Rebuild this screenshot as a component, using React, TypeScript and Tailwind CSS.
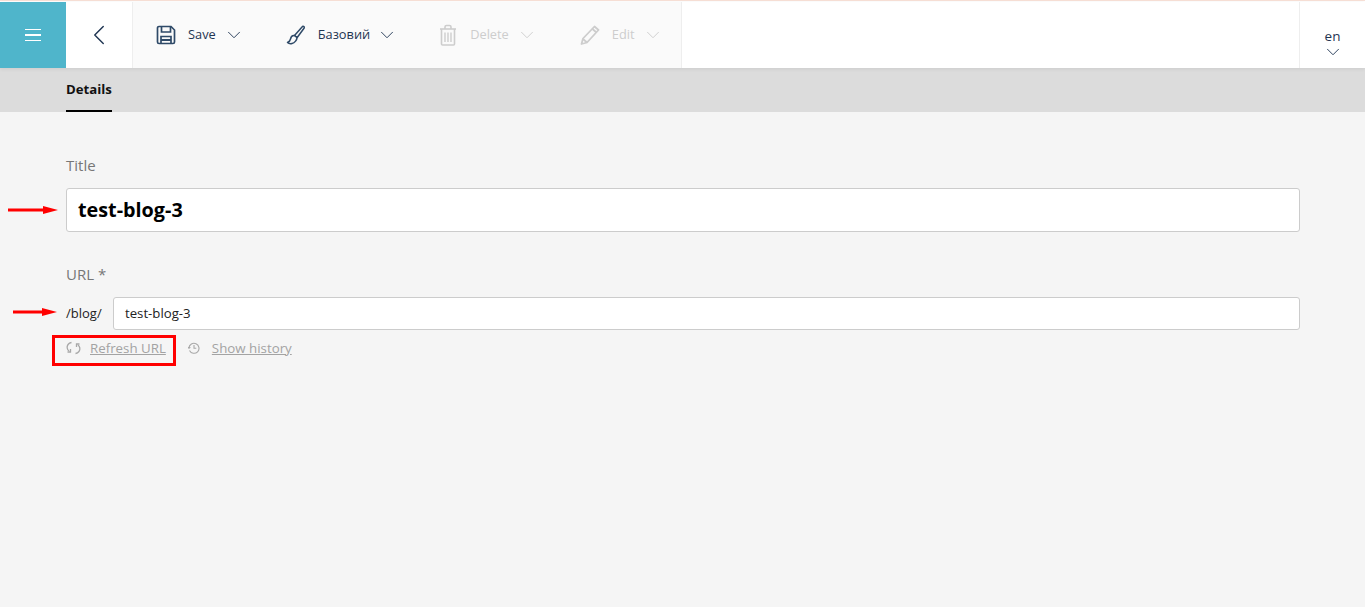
import React from "react";
import { ChevronDown, ChevronLeft } from "lucide-react";

interface ToolButtonProps {
  icon: React.ReactNode;
  label: string;
  disabled?: boolean;
  className?: string;
  chevronClassName?: string;
}

const ToolButton: React.FC<ToolButtonProps> = ({ icon, label, disabled, className, chevronClassName }) => {
  const color = disabled ? "text-[#cdcdcd]" : "text-[#1f3552]";
  return (
    <div className={`flex items-center ${color} ${className ?? ""}`}>
      <span className="flex w-5 justify-center">{icon}</span>
      <span className="ml-[12px] text-[12.8px]">{label}</span>
      <ChevronDown className={chevronClassName ?? "ml-[7px]"} size={22} strokeWidth={1} />
    </div>
  );
};

const SaveIcon = () => (
  <svg width={20} height={20} viewBox="0 0 20 20" fill="none" stroke="#2f4a68" strokeWidth={1.7}>
    <path d="M2.5 1.5h12.5l3.5 3.5v12a1.5 1.5 0 0 1-1.5 1.5h-14a1.5 1.5 0 0 1-1.5-1.5v-14a1.5 1.5 0 0 1 1.5-1.5z" />
    <path d="M5.5 1.5v5.5h9v-5.5" />
    <path d="M5 18.5v-7h10v7" />
    <path d="M5 15h10" strokeWidth={2} />
  </svg>
);

const BrushIcon = () => (
  <svg width={20} height={20} viewBox="0 0 20 20" fill="none" stroke="#2f4a68" strokeWidth={1.5} strokeLinejoin="round">
    <path d="M16.5 1.5c1-.6 2.2.4 1.7 1.5l-7 9.5-2.7-2z" />
    <path d="M8.5 10.5c-2.5-.4-3.6 1.5-4 3.5-.3 1.7-1.500 2.800-3 3.500 1 1 3 1.300 4.500 1 2.800-.5 5-3.800 5-6z" />
  </svg>
);

const TrashIcon = () => (
  <svg width={20} height={22} viewBox="0 0 20 22" fill="none" stroke="#cdcdcd" strokeWidth={1.6}>
    <path d="M2 5h16" />
    <path d="M7 5v-2a1.500 1.500 0 0 1 1.500-1.500h3a1.500 1.500 0 0 1 1.500 1.500v2" />
    <path d="M3.500 5v15a1 1 0 0 0 1 1h11a1 1 0 0 0 1-1v-15" />
    <path d="M7 8.500v9.500M10 8.500v9.500M13 8.500v9.500" strokeWidth={1.400} />
  </svg>
);

const PencilIcon = () => (
  <svg width={20} height={20} viewBox="0 0 20 20" fill="none" stroke="#cdcdcd" strokeWidth={1.800} strokeLinejoin="round">
    <path d="M14.500 1.500l4 3.500-11.500 12.500-5.500 1.500 1.500-5.500z" />
    <path d="M12.500 4l4 3.500" />
    <path d="M3 14l4 3.500" />
  </svg>
);

const RefreshIcon = () => (
  <svg width={15} height={14} viewBox="0 0 15 14" fill="none" stroke="#a8a8a8" strokeWidth={1.300}>
    <path d="M5.500 1.500c-3 .5-4.800 3-4.300 5.500.2 1.300.9 2.300 1.800 3" />
    <path d="M9.500 12.500c3-.5 4.800-3 4.300-5.500-.2-1.300-.9-2.300-1.800-3" />
    <path d="M1.500 11h3v-3" />
    <path d="M13.500 3h-3v3" />
  </svg>
);

const HistoryIcon = () => (
  <svg width={12} height={12} viewBox="0 0 12 12" fill="none" stroke="#a8a8a8" strokeWidth={1.100}>
    <path d="M1.500 8.500a5 5 0 1 0 -.5 -2.500" />
    <path d="M6 3v3.200h2.300" />
    <path d="M0 5l1 1.300 1.300-1" />
  </svg>
);

const RedArrow: React.FC<{ className: string; width: number }> = ({ className, width }) => (
  <svg className={`absolute ${className}`} width={width} height={10} viewBox={`0 0 ${width} 10`}>
    <rect x={0} y={3.500} width={width - 10} height={3} fill="#ff0000" />
    <polygon points={`${width - 15},1 ${width},5 ${width - 15},9`} fill="#ff0000" />
  </svg>
);

const App: React.FC = () => {
  return (
    <div className="relative h-[607px] w-[1365px] overflow-hidden bg-[#f5f5f5] font-['Open_Sans',sans-serif]">
      <div className="h-[2px] border-t border-[#f8e0d6] bg-white" />
      <header className="relative z-10 flex h-[66px] bg-white shadow-[0_1px_4px_rgba(0,0,0,0.08)]">
        <div className="flex w-[66px] flex-col items-center justify-center gap-[4px] bg-[#4fb5cb]">
          <span className="h-[1.500px] w-[16px] bg-white" />
          <span className="h-[1.500px] w-[16px] bg-white" />
          <span className="h-[1.500px] w-[16px] bg-white" />
        </div>
        <div className="flex w-[67px] items-center justify-center border-r border-[#eeeeee] text-[#1f3552]">
          <ChevronLeft size={34} strokeWidth={1} />
        </div>
        <div className="flex w-[549px] items-center border-r border-[#eeeeee] bg-[#fafafa] pl-[23px]">
          <ToolButton icon={<SaveIcon />} label="Save" />
          <ToolButton className="ml-[41px]" chevronClassName="ml-[6px]" icon={<BrushIcon />} label="Базовий" />
          <ToolButton className="ml-[40px]" disabled icon={<TrashIcon />} label="Delete" />
          <ToolButton className="ml-[42px]" disabled icon={<PencilIcon />} label="Edit" />
        </div>
        <div className="flex-1" />
        <div className="flex w-[66px] flex-col items-center justify-center border-l border-[#eeeeee] pt-[16px] text-[#1f3552]">
          <span className="text-[13.500px] leading-[18px]">en</span>
          <ChevronDown className="-my-[4px]" size={22} strokeWidth={1} />
        </div>
      </header>

      <nav className="flex h-[44px] bg-[#dcdcdc] pl-[66px]">
        <div className="flex h-[44px] items-center border-b-2 border-black pt-[2px] text-[13.200px] font-bold text-[#111111]">
          Details
        </div>
      </nav>

      <main className="ml-[66px] w-[1234px] pt-[43px]">
        <label className="block text-[15px] leading-[20px] text-[#777777]">Title</label>
        <div className="mt-[13px] flex h-[44px] items-center rounded-[3px] border border-[#cccccc] bg-white px-[11px] text-[19.800px] font-bold text-black">
          test-blog-3
        </div>

        <label className="mt-[32px] block text-[15px] leading-[20px] text-[#777777]">URL *</label>
        <div className="mt-[13px] flex items-center">
          <span className="w-[47px] text-[13px] text-[#222222]">/blog/</span>
          <div className="flex h-[33px] flex-1 items-center rounded-[3px] border border-[#cccccc] bg-white px-[11px] text-[13.200px] text-[#222222]">
            test-blog-3
          </div>
        </div>
        <div className="mt-[9px] flex items-center text-[13.300px] leading-[18px] text-[#a3a3a3]">
          <RefreshIcon />
          <span className="ml-[9px] underline">Refresh URL</span>
          <span className="ml-[22px]">
            <HistoryIcon />
          </span>
          <span className="ml-[12px] underline">Show history</span>
        </div>
      </main>

      <RedArrow className="left-[8px] top-[205px]" width={50} />
      <RedArrow className="left-[13px] top-[307px]" width={44} />
      <div className="absolute left-[52px] top-[335px] h-[31px] w-[124px] border-[3px] border-[#ff0000]" />
    </div>
  );
};

export default App;
